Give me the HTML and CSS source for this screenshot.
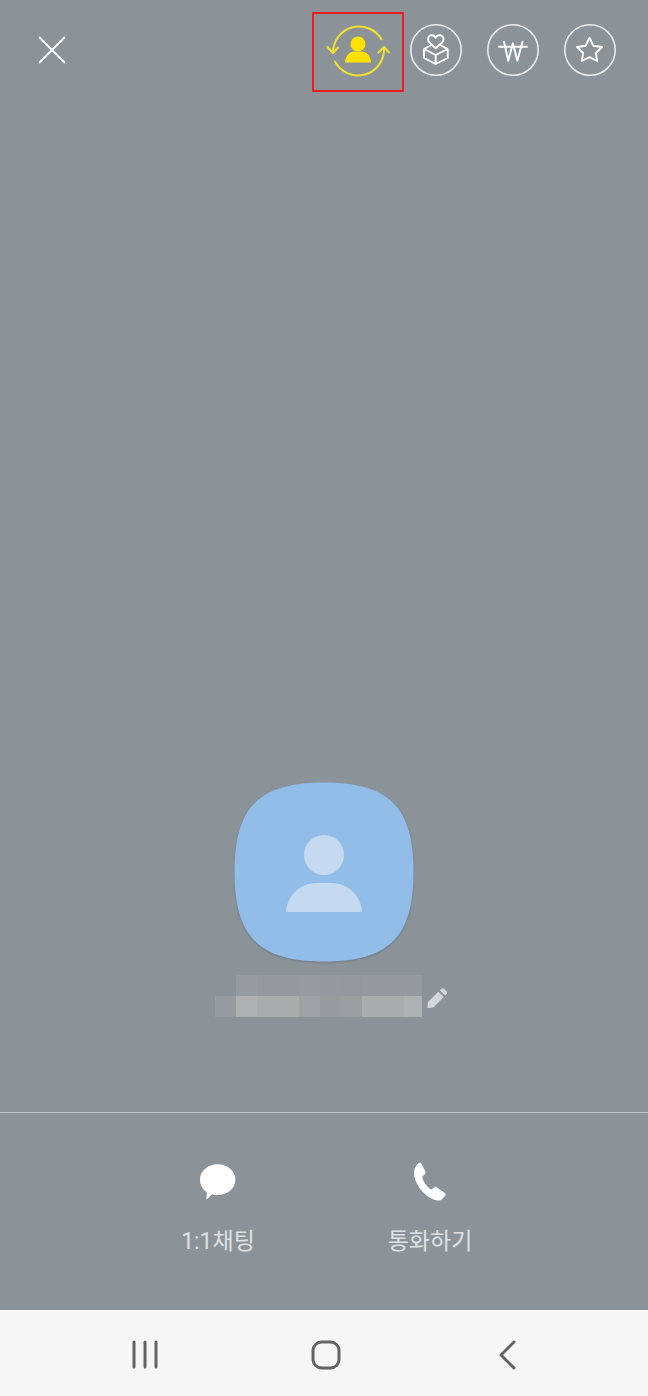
FILE: index.html
```html
<!DOCTYPE html>
<html lang="ko">
<head>
<meta charset="utf-8">
<title>프로필</title>
<link rel="stylesheet" href="styles.css">
</head>
<body>
<div class="screen">
  <header class="topbar">
    <svg class="close" viewBox="32 30 40 40"><path d="M39 37L65 63M65 37L39 63"/></svg>
    <div class="tools">
      <div class="swap">
        <svg viewBox="314 14 88 76">
          <g class="swap-line">
            <path d="M333 52A26 26 0 0 1 381.5 39.5"/>
            <path d="M384 48A26 26 0 0 1 335 61.5"/>
            <path d="M327.5 47L333 53L338 47.5"/>
            <path d="M378.5 52.5L384 47L389 52.5"/>
          </g>
          <circle class="swap-fill" cx="358" cy="44" r="7.5"/>
          <path class="swap-fill" d="M345 62.5C345 56 350 51.5 354 51.5H362C366 51.5 371 56 371 62.5Z"/>
        </svg>
      </div>
      <svg class="tool" viewBox="410 24 52 52">
        <circle cx="436" cy="50" r="25.2"/>
        <path d="M435.7 48.3L429.5 42.5C427 40 427.7 36 431 35.3C433 35 435 36 435.7 37.8C436.5 36 438.5 35 440.5 35.3C443.8 36 444.5 40 442 42.5Z"/>
        <path d="M430.5 45.5L424 49L435.7 55L447.7 49L441 45.5M424 49V58L435.7 64L447.7 58V49M435.7 55V64"/>
      </svg>
      <svg class="tool" viewBox="487 24 52 52">
        <circle cx="513" cy="50" r="25.2"/>
        <path d="M504 41.7L508.3 60.7L512.9 43.3L517.4 60.7L522.5 41.7M499 46.7H527"/>
      </svg>
      <svg class="tool" viewBox="564 24 52 52">
        <circle cx="590" cy="50" r="25.2"/>
        <path d="M589.5 37.8L593.3 45.7L602 47L595.8 53L597.2 61L589.5 57.2L581.8 61L583.2 53L577 47L585.7 45.7Z"/>
      </svg>
    </div>
  </header>

  <main class="profile">
    <svg class="avatar" viewBox="0 0 180 180">
      <path class="avatar-shape" d="M90 .5C155 .5 179.5 25 179.5 90C179.5 155 155 179.5 90 179.5C25 179.5 .5 155 .5 90C.5 25 25 .5 90 .5Z"/>
      <circle class="avatar-person" cx="90" cy="73" r="20"/>
      <path class="avatar-person" d="M52 130C53 113 67 101 82 101H98C113 101 127 113 128 130Z"/>
    </svg>
    <div class="name-row">
      <div class="name-mosaic">
        <i></i><i class="t1"></i><i class="t2"></i><i class="t2"></i><i class="t1"></i><i class="t3"></i><i class="t2"></i><i class="t3"></i><i class="t3"></i><i class="t3"></i>
        <i class="b0"></i><i class="b1"></i><i class="b2"></i><i class="b2"></i><i class="b3"></i><i class="t1"></i><i class="b4"></i><i class="b2"></i><i class="b2"></i><i class="b1"></i>
      </div>
      <svg class="pencil" viewBox="0 0 22 22"><path d="M.6 21.4L1 15.5L12.5 4L18.5 10L7 21.5L1 21.9C.7 21.9 .6 21.7 .6 21.4ZM14 2.5L15.5 1C16.5 0 18 0 19 1L21.3 3.3C22.3 4.3 22.3 5.8 21.3 6.8L20 8.3Z"/></svg>
    </div>
  </main>

  <section class="actions">
    <div class="action">
      <svg class="action-icon" viewBox="196 1158 44 44"><path d="M217.7 1164.3C227.5 1164.3 235.4 1171 235.4 1179.5C235.4 1188.5 227.5 1195 217.7 1195C215.5 1195 213.5 1194.7 212 1194.2L207.3 1199C206.7 1199.5 206.3 1199.2 206.4 1198.5L206.8 1192.3C202.8 1189.5 200 1185 200 1179.5C200 1171 207.9 1164.3 217.7 1164.3Z"/></svg>
      <span class="action-label">1:1채팅</span>
    </div>
    <div class="action">
      <svg class="action-icon" viewBox="409 1158 44 44"><path d="M419.5 1163.2C420.5 1162.4 421.8 1162.6 422.4 1163.6L426.3 1171.5C426.8 1172.6 426.6 1173.5 425.8 1174.2L423.3 1176.6C423.6 1181 427.8 1187 432.2 1189.6L435.2 1187.2C436 1186.6 437 1186.6 437.8 1187.2L445.8 1193C446.8 1193.8 446.9 1195 446 1196L443.3 1199C441.8 1200.5 439.5 1200.9 437.4 1200.3C426 1197.5 415 1184 415 1172.5C415 1168.5 416.8 1165.2 419.5 1163.2Z"/></svg>
      <span class="action-label">통화하기</span>
    </div>
  </section>

  <nav class="navbar">
    <div class="nav-item"><svg viewBox="0 0 30 30"><path d="M4 2V27M15 2V27M26 2V27"/></svg></div>
    <div class="nav-item"><svg viewBox="0 0 30 30"><rect x="2" y="2" width="26" height="26" rx="8.5"/></svg></div>
    <div class="nav-item"><svg viewBox="0 0 30 30"><path d="M22 2L9 15L22 28"/></svg></div>
  </nav>
</div>
</body>
</html>
```

FILE: styles.css
```css
* {
  box-sizing: border-box;
}

html,
body {
  margin: 0;
  padding: 0;
}

body {
  font-family: Roboto, "Noto Sans CJK KR", "Noto Sans", sans-serif;
  background: #8b9398;
}

svg {
  display: block;
  fill: none;
}

.screen {
  display: flex;
  flex-direction: column;
  width: 648px;
  height: 1396px;
  background: #8b9398;
  overflow: hidden;
}

/* top bar */
.topbar {
  display: flex;
  justify-content: space-between;
  align-items: flex-start;
  height: 100px;
  padding: 12px 32px 0 32px;
}

.close {
  width: 40px;
  height: 40px;
  margin-top: 18px;
  stroke: #ffffff;
  stroke-width: 1.8;
}

.tools {
  display: flex;
  align-items: flex-start;
  gap: 25px;
}

.swap {
  width: 92px;
  height: 80px;
  margin-right: -19px;
  border: 2px solid #ed1c24;
}

.swap svg {
  width: 88px;
  height: 76px;
}

.swap-line {
  stroke: #f1e02f;
  stroke-width: 2;
  stroke-linecap: round;
  stroke-linejoin: round;
}

.swap-fill {
  fill: #ffe200;
}

.tool {
  width: 52px;
  height: 52px;
  margin-top: 12px;
  stroke: #ffffff;
  stroke-width: 1.9;
  stroke-linejoin: round;
  stroke-linecap: round;
}

.tool circle {
  stroke: #e9ebec;
  stroke-width: 1.6;
}

/* profile */
.profile {
  flex: 1;
  display: flex;
  flex-direction: column;
  align-items: center;
  justify-content: flex-end;
  padding-bottom: 95px;
}

.avatar {
  width: 180px;
  height: 180px;
  filter: drop-shadow(0 1px 1px rgba(70, 90, 120, 0.45));
}

.avatar-shape {
  fill: #92bde8;
}

.avatar-person {
  fill: #c5daf1;
}

.name-row {
  display: flex;
  align-items: flex-end;
  align-self: flex-start;
  gap: 5px;
  margin: 13px 0 0 215px;
}

.name-mosaic {
  display: grid;
  grid-template-columns: repeat(9, 21px) 18px;
  grid-auto-rows: 21px;
}

.t1 { background: #979c9e; }
.t2 { background: #94999e; }
.t3 { background: #959a9f; }
.b0 { background: #969ca0; }
.b1 { background: #adb1b2; }
.b2 { background: #a8adae; }
.b3 { background: #9da2a4; }
.b4 { background: #9a9fa2; }

.pencil {
  width: 20px;
  height: 20px;
  margin-bottom: 9px;
  fill: #d5d8da;
}

/* actions */
.actions {
  display: flex;
  justify-content: center;
  height: 198px;
  padding-top: 45px;
  border-top: 1px solid #bec1c5;
}

.action {
  display: flex;
  flex-direction: column;
  align-items: center;
  width: 212px;
}

.action-icon {
  width: 44px;
  height: 44px;
  fill: #ffffff;
}

.action-label {
  margin-top: 22px;
  font-size: 23px;
  line-height: 36px;
  color: #dfe1e3;
}

/* system navigation */
.navbar {
  display: flex;
  align-items: center;
  height: 86px;
  padding: 4px 0 0 54px;
  background: #f6f6f6;
}

.nav-item {
  display: flex;
  justify-content: center;
  width: 181px;
}

.nav-item svg {
  width: 30px;
  height: 30px;
  stroke: #636363;
  stroke-width: 3;
  stroke-linecap: round;
  stroke-linejoin: round;
}
```
